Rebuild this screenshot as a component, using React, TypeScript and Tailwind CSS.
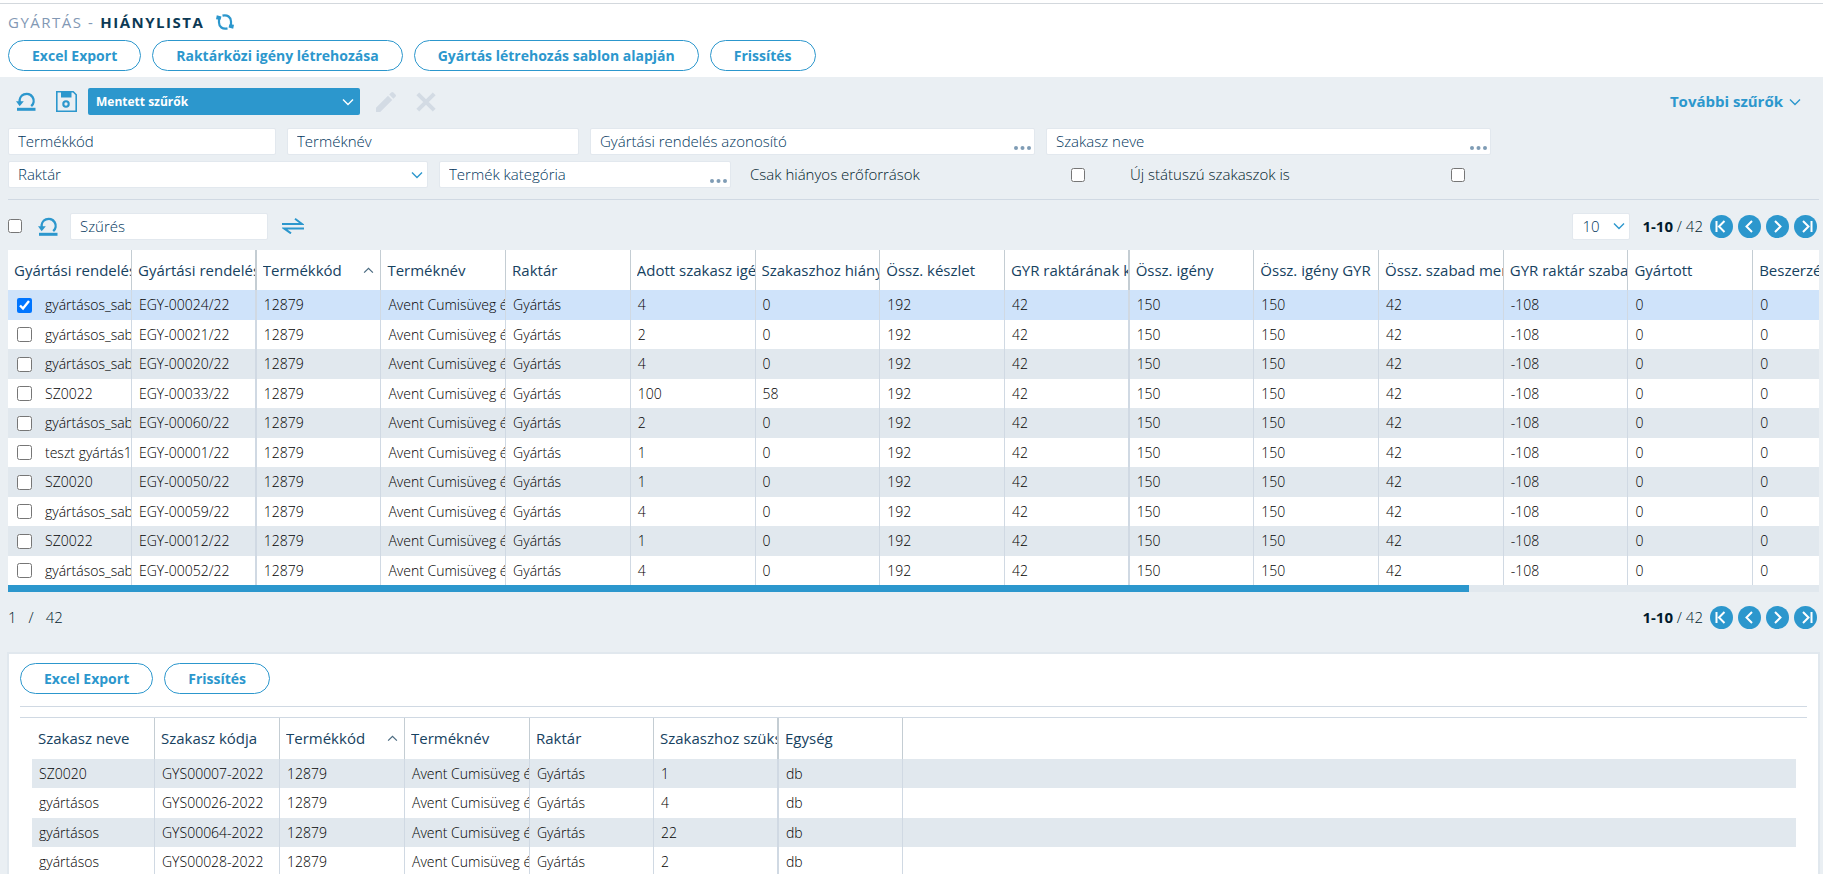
import { ReactNode, useState } from 'react';

type Column = {
  label: string;
  sorted?: boolean;
  thick?: boolean;
};

const mainColumns: Column[] = [
  { label: 'Gyártási rendelés neve' },
  { label: 'Gyártási rendelés kódja', thick: true },
  { label: 'Termékkód', sorted: true },
  { label: 'Terméknév' },
  { label: 'Raktár' },
  { label: 'Adott szakasz igénye' },
  { label: 'Szakaszhoz hiányzó' },
  { label: 'Össz. készlet' },
  { label: 'GYR raktárának készlete', thick: true },
  { label: 'Össz. igény' },
  { label: 'Össz. igény GYR' },
  { label: 'Össz. szabad mennyiség' },
  { label: 'GYR raktár szabad' },
  { label: 'Gyártott' },
  { label: 'Beszerzés' },
];

const mainRows = [
  ['gyártásos_sablon', 'EGY-00024/22', '4', '0'],
  ['gyártásos_sablon', 'EGY-00021/22', '2', '0'],
  ['gyártásos_sablon', 'EGY-00020/22', '4', '0'],
  ['SZ0022', 'EGY-00033/22', '100', '58'],
  ['gyártásos_sablon', 'EGY-00060/22', '2', '0'],
  ['teszt gyártás1', 'EGY-00001/22', '1', '0'],
  ['SZ0020', 'EGY-00050/22', '1', '0'],
  ['gyártásos_sablon', 'EGY-00059/22', '4', '0'],
  ['SZ0022', 'EGY-00012/22', '1', '0'],
  ['gyártásos_sablon', 'EGY-00052/22', '4', '0'],
];

const stageColumns: Column[] = [
  { label: 'Szakasz neve' },
  { label: 'Szakasz kódja' },
  { label: 'Termékkód', sorted: true },
  { label: 'Terméknév' },
  { label: 'Raktár' },
  { label: 'Szakaszhoz szükséges', thick: true },
  { label: 'Egység' },
];

const stageRows = [
  ['SZ0020', 'GYS00007-2022', '1'],
  ['gyártásos', 'GYS00026-2022', '4'],
  ['gyártásos', 'GYS00064-2022', '22'],
  ['gyártásos', 'GYS00028-2022', '2'],
];

const Chevron = ({ className, flip = false }: { className: string; flip?: boolean }) => (
  <svg viewBox="0 0 12 8" className={className} fill="none" stroke="currentColor" strokeWidth="1.4">
    <path d={flip ? 'M1 6.5 6 1.5l5 5' : 'M1 1.5l5 5 5-5'} />
  </svg>
);

const RefreshIcon = () => (
  <svg viewBox="0 0 18 16" className="h-4 w-[18px]" fill="none" stroke="currentColor" strokeWidth="2.2">
    <path d="M6.500 1.600C11.500.4 15 3.200 15 7.500V11.500M11.500 14.400C6.500 15.600 3 12.800 3 8.500V4.500" />
    <path d="M0 5.200.8 1.200 5.400 2.400 4.600 5.800zM18 10.800l-.8 4-4.600-1.200.8-3.400z" fill="currentColor" stroke="none" />
  </svg>
);

const ResetIcon = () => (
  <svg viewBox="0 0 20 19" className="h-[19px] w-5" fill="none" stroke="currentColor" strokeWidth="2.4">
    <path d="M3.800 10.500A7 7 0 1 1 15.200 14.200" />
    <path d="M0 9.200h7.800L3.700 14.200z" fill="currentColor" stroke="none" />
    <path d="M1 17.300h18.500" strokeWidth="3" />
  </svg>
);

const SaveIcon = () => (
  <svg viewBox="0 0 21 21" className="size-[21px]" fill="none" stroke="currentColor" strokeWidth="1.6">
    <path d="M.8.8h16.400l3 3v16.400H.8z" />
    <path d="M5 1h10.500v5.500H5z" fill="currentColor" stroke="none" />
    <circle cx="10" cy="13" r="2.700" strokeWidth="2.100" />
  </svg>
);

const PencilIcon = () => (
  <svg viewBox="0 0 20 20" className="size-5" fill="currentColor">
    <path d="M0 20v-4.200L12 3.800 16.200 8 4.200 20zM13.200 2.600 15.200.6a1.600 1.600 0 0 1 2.300 0l1.900 1.900a1.600 1.600 0 0 1 0 2.300l-2 2z" />
  </svg>
);

const CloseIcon = () => (
  <svg viewBox="0 0 20 20" className="size-5" fill="none" stroke="currentColor" strokeWidth="4">
    <path d="M1.800 1.800 18.200 18.200M18.200 1.800 1.800 18.200" />
  </svg>
);

const SwapIcon = () => (
  <svg viewBox="0 0 22 16" className="h-4 w-[22px]" fill="none" stroke="currentColor" strokeWidth="2">
    <path d="M0 6h20L13 .8M22 10.400H2L9 15.400" />
  </svg>
);

const PillButton = ({ children }: { children: ReactNode }) => (
  <button
    type="button"
    className="h-[31px] rounded-full border border-[#2c97cd] bg-white px-[23px] text-sm font-bold whitespace-nowrap text-[#2c97cd]"
  >
    {children}
  </button>
);

// szűrőmező, opcionális "..." választógombbal
const FilterInput = ({ label, className, picker = false }: { label: string; className: string; picker?: boolean }) => (
  <div className={`flex h-[27px] rounded-xs border border-[#e2e8ee] bg-white ${className}`}>
    <input
      type="text"
      aria-label={label}
      placeholder={label}
      className="w-full min-w-0 bg-transparent px-[9px] text-[15px] font-light text-[#00365c] outline-none placeholder:text-[#00365c]"
    />
    {picker && (
      <button type="button" aria-label={`${label} választás`} className="flex items-end px-[3px] pb-1 text-[#7f9cb5]">
        <svg viewBox="0 0 17 4" className="h-1 w-[17px]" fill="currentColor">
          <circle cx="2" cy="2" r="2" />
          <circle cx="8.5" cy="2" r="2" />
          <circle cx="15" cy="2" r="2" />
        </svg>
      </button>
    )}
  </div>
);

const FilterCheckbox = ({ id, label, className }: { id: string; label: string; className: string }) => (
  <div className={`flex items-center justify-between ${className}`}>
    <label htmlFor={id} className="text-[15px] font-light text-[#001a2b]">
      {label}
    </label>
    <input id={id} type="checkbox" className="size-3.5" />
  </div>
);

const pagerPaths = [
  { label: 'Első oldal', d: 'M6.500 6v11M14.500 6 9 11.500l5.500 5.500' },
  { label: 'Előző oldal', d: 'M14 6 8.500 11.500 14 17' },
  { label: 'Következő oldal', d: 'M9 6l5.500 5.500L9 17' },
  { label: 'Utolsó oldal', d: 'M17.500 6v11M9 6l5.500 5.500L9 17' },
];

const Pager = () => (
  <div className="flex items-center text-[15px] font-light text-[#001a2b]">
    <span className="mr-[7px]">
      <b className="font-bold">1-10</b> / 42
    </span>
    <div className="flex gap-[5px]">
      {pagerPaths.map(({ label, d }) => (
        <button key={label} type="button" aria-label={label} className="rounded-full bg-[#2c97cd] text-white">
          <svg viewBox="0 0 23 23" className="size-[23px]" fill="none" stroke="currentColor" strokeWidth="2">
            <path d={d} />
          </svg>
        </button>
      ))}
    </div>
  </div>
);

const HeaderCell = ({ column }: { column: Column }) => (
  <th
    className={`border-[#c4cdd3] pl-1.5 text-left text-[15px] font-normal whitespace-nowrap text-[#16425f] ${
      column.thick ? 'border-r-2' : 'border-r'
    }`}
  >
    <div className="flex items-center justify-between overflow-hidden">
      {column.label}
      {column.sorted && <Chevron flip className="mr-1.5 h-[7px] w-[11px] text-[#4a6a80]" />}
    </div>
  </th>
);

const Cell = ({ thick, children }: { thick?: boolean; children?: ReactNode }) => (
  <td
    className={`overflow-hidden border-[#d0d9e3] pl-[7px] text-sm font-light whitespace-nowrap text-black ${
      thick ? 'border-r-2' : 'border-r'
    }`}
  >
    {children}
  </td>
);

const ShortageTable = () => {
  const [selected, setSelected] = useState<string[]>(['EGY-00024/22']);

  const toggle = (code: string) =>
    setSelected(prev => (prev.includes(code) ? prev.filter(c => c !== code) : [...prev, code]));

  return (
    <div>
      <div className="overflow-hidden">
        <table className="w-[1870px] table-fixed border-separate border-spacing-0">
          <colgroup>
            <col className="w-[124px]" />
          </colgroup>
          <thead>
            <tr className="h-10 bg-white">
              {mainColumns.map(column => (
                <HeaderCell key={column.label} column={column} />
              ))}
            </tr>
          </thead>
          <tbody>
            {mainRows.map(([name, code, need, missing]) => {
              const values = [code, '12879', 'Avent Cumisüveg és etető', 'Gyártás', need, missing, '192', '42', '150', '150', '42', '-108', '0', '0'];
              return (
                <tr
                  key={code}
                  className={`odd:h-[30px] even:h-[29px] ${
                    selected.includes(code) ? 'bg-[#cfe3fa]' : 'odd:bg-[#e1e8ee] even:bg-white'
                  }`}
                >
                  <Cell>
                    <div className="flex items-center gap-[13px] pl-0.5">
                      <input
                        type="checkbox"
                        aria-label={code}
                        className="size-[15px] shrink-0"
                        checked={selected.includes(code)}
                        onChange={() => toggle(code)}
                      />
                      {name}
                    </div>
                  </Cell>
                  {values.map((value, i) => (
                    <Cell key={i} thick={mainColumns[i + 1].thick}>
                      {value}
                    </Cell>
                  ))}
                </tr>
              );
            })}
          </tbody>
        </table>
      </div>
      <div className="h-[7px] bg-[#e1e8ee]">
        <div className="h-full w-[80.7%] bg-[#2c97cd]" />
      </div>
    </div>
  );
};

const StageTable = () => (
  <table className="w-full table-fixed border-separate border-spacing-0">
    <colgroup>
      <col className="w-[123px]" />
      <col className="w-[125px]" />
      <col className="w-[125px]" />
      <col className="w-[125px]" />
      <col className="w-[124px]" />
      <col className="w-[125px]" />
      <col className="w-[124px]" />
      <col />
    </colgroup>
    <thead>
      <tr className="h-[41px]">
        {stageColumns.map(column => (
          <HeaderCell key={column.label} column={column} />
        ))}
        <td />
      </tr>
    </thead>
    <tbody>
      {stageRows.map(([name, code, need]) => (
        <tr key={code} className="odd:h-[29px] odd:bg-[#e1e8ee] even:h-[30px]">
          {[name, code, '12879', 'Avent Cumisüveg és etető', 'Gyártás', need, 'db'].map((value, i) => (
            <Cell key={i} thick={stageColumns[i].thick}>
              {value}
            </Cell>
          ))}
          <td />
        </tr>
      ))}
    </tbody>
  </table>
);

export default function App() {
  return (
    <div className="h-screen overflow-hidden bg-[#eaeff3] font-['Open_Sans',sans-serif]">
      <header className="bg-white pt-[3px]">
        <div className="border-t border-[#d3d8dd] px-2 pb-1.5">
          <div className="flex h-9 items-center text-[#2c97cd]">
            <h1 className="mr-3 flex gap-1.5 text-[15px] tracking-widest text-[#8298b4]">
              GYÁRTÁS -<span className="font-bold text-[#0c3a55]">HIÁNYLISTA</span>
            </h1>
            <button type="button" aria-label="Újratöltés">
              <RefreshIcon />
            </button>
          </div>
          <div className="flex gap-[11px]">
            <PillButton>Excel Export</PillButton>
            <PillButton>Raktárközi igény létrehozása</PillButton>
            <PillButton>Gyártás létrehozás sablon alapján</PillButton>
            <PillButton>Frissítés</PillButton>
          </div>
        </div>
      </header>

      <main className="pr-1 pl-2">
        <section className="border-b border-[#d0d9e3] py-[11px]">
          <div className="flex items-center pl-2 text-[#2c97cd]">
            <button type="button" aria-label="Szűrők törlése">
              <ResetIcon />
            </button>
            <button type="button" aria-label="Szűrő mentése" className="ml-5">
              <SaveIcon />
            </button>
            <div className="relative ml-[11px] flex items-center">
              <select
                aria-label="Mentett szűrők"
                className="h-[27px] w-[272px] appearance-none rounded-xs bg-[#2c97cd] px-2 text-xs font-bold text-white"
              >
                <option>Mentett szűrők</option>
              </select>
              <Chevron className="pointer-events-none absolute right-1.5 h-2 w-3 text-white" />
            </div>
            <button type="button" aria-label="Szerkesztés" className="ml-4 text-[#d3dbe4]">
              <PencilIcon />
            </button>
            <button type="button" aria-label="Törlés" className="ml-5 text-[#d3dbe4]">
              <CloseIcon />
            </button>
            <button type="button" className="mr-[18px] ml-auto flex items-center gap-1.5 text-[15px] font-bold">
              További szűrők
              <Chevron className="h-2 w-3" />
            </button>
          </div>

          <div className="mt-[13px] flex gap-[11px]">
            <FilterInput label="Termékkód" className="w-[268px]" />
            <FilterInput label="Terméknév" className="w-[292px]" />
            <FilterInput label="Gyártási rendelés azonosító" className="w-[445px]" picker />
            <FilterInput label="Szakasz neve" className="w-[445px]" picker />
          </div>
          <div className="mt-1.5 flex items-center gap-[11px]">
            <div className="relative flex w-[420px] items-center">
              <select
                aria-label="Raktár"
                className="h-[27px] w-full appearance-none rounded-xs border border-[#e2e8ee] bg-white px-[9px] text-[15px] font-light text-[#00365c]"
              >
                <option>Raktár</option>
              </select>
              <Chevron className="pointer-events-none absolute right-[5px] h-2 w-3 text-[#2c97cd]" />
            </div>
            <FilterInput label="Termék kategória" className="w-[292px]" picker />
            <FilterCheckbox id="only-missing" label="Csak hiányos erőforrások" className="ml-2 w-[335px]" />
            <FilterCheckbox id="new-stages" label="Új státuszú szakaszok is" className="ml-[34px] w-[335px]" />
          </div>
        </section>

        <div className="flex h-[50px] items-center pt-0.5 text-[#2c97cd]">
          <input type="checkbox" aria-label="Összes kijelölése" className="size-3.5" />
          <button type="button" aria-label="Szűrés törlése" className="mr-3 ml-4">
            <ResetIcon />
          </button>
          <FilterInput label="Szűrés" className="w-[198px]" />
          <button type="button" aria-label="Csere" className="ml-3.5">
            <SwapIcon />
          </button>
          <div className="relative mr-3 ml-auto flex items-center">
            <select
              aria-label="Sorok száma"
              className="h-[27px] w-[58px] appearance-none rounded-xs border border-[#e2e8ee] bg-white px-[9px] text-[15px] font-light text-[#00365c]"
            >
              <option>10</option>
            </select>
            <Chevron className="pointer-events-none absolute right-[5px] h-2 w-3" />
          </div>
          <div className="pr-0.5">
            <Pager />
          </div>
        </div>

        <ShortageTable />

        <div className="flex h-[50px] items-center justify-between pr-0.5 text-[15px] font-light text-[#001a2b]">
          <div className="flex gap-3">
            <span>1</span>
            <span>/</span>
            <span>42</span>
          </div>
          <Pager />
        </div>

        <section className="-mx-px mt-2.5 border-2 border-b-0 border-[#e1e8ee] bg-white px-[11px] pt-[9px]">
          <div className="flex gap-[11px] border-b border-[#d0d9e3] pb-3">
            <PillButton>Excel Export</PillButton>
            <PillButton>Frissítés</PillButton>
          </div>
          <div className="mt-2.5 border-t border-[#d0d9e3] pr-[11px] pl-3">
            <StageTable />
          </div>
        </section>
      </main>
    </div>
  );
}
